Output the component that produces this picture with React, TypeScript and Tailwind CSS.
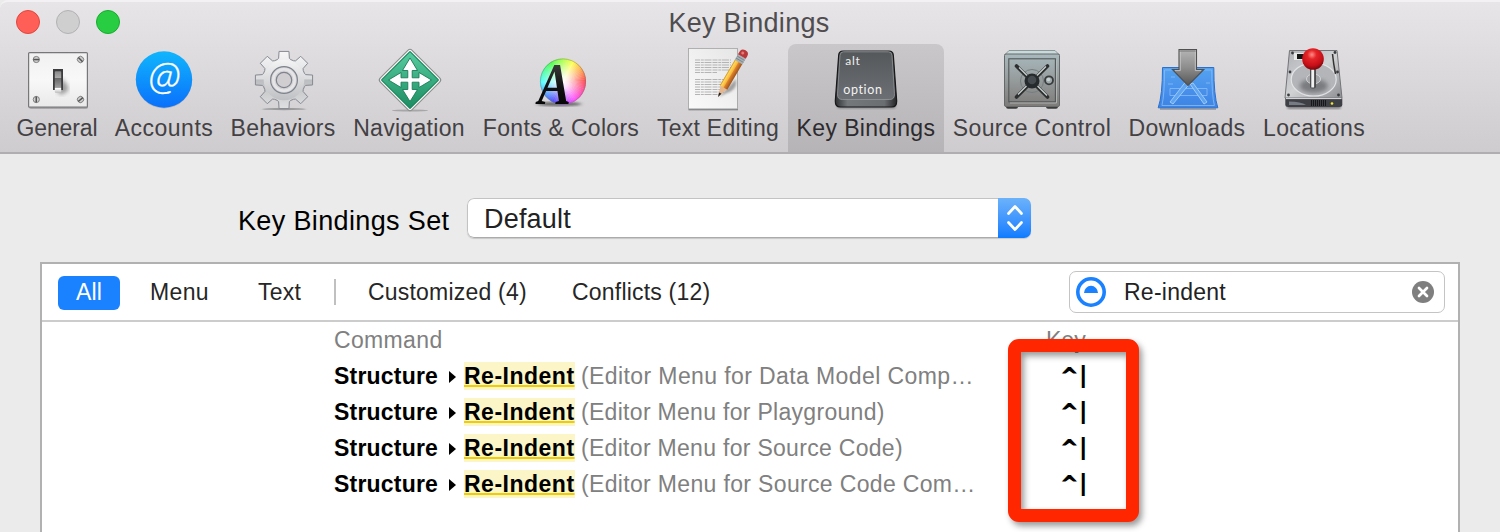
import React from "react";

const bar = "font-['Liberation_Sans',Arial,sans-serif]";

function GeneralIcon() {
  const screws: [number, number, number][] = [[36.3, 59.5, 0], [80.5, 59.5, 45], [36.3, 99.5, 90], [80.5, 99.5, -40]];
  return (
    <g>
      <defs>
        <linearGradient id="plate" x1="0" y1="0" x2="0" y2="1">
          <stop offset="0" stopColor="#f1f1f1" /><stop offset=".5" stopColor="#f8f8f8" /><stop offset="1" stopColor="#e9e9ea" />
        </linearGradient>
        <linearGradient id="lever" x1="0" y1="0" x2="0" y2="1">
          <stop offset="0" stopColor="#888" /><stop offset=".3" stopColor="#aaa" /><stop offset=".32" stopColor="#666" />
          <stop offset=".75" stopColor="#9d9d9d" /><stop offset=".8" stopColor="#fff" /><stop offset="1" stopColor="#bbb" />
        </linearGradient>
        <filter id="soft"><feGaussianBlur stdDeviation="2" /></filter>
      </defs>
      <rect x="29" y="54" width="59" height="55" rx="2" fill="#555" opacity=".35" />
      <rect x="28.6" y="52.6" width="58.8" height="54.6" rx="1" fill="url(#plate)" stroke="#777679" strokeWidth="1.2" />
      <path d="M62 78l6 8v5l-7 4-4-4z" fill="#444" opacity=".5" filter="url(#soft)" />
      <rect x="53" y="69" width="10" height="21" fill="#3c3c3e" />
      <rect x="54.8" y="71.2" width="6.4" height="21.6" rx=".8" fill="url(#lever)" />
      {screws.map(([x, y, r]) => (
        <g key={`${x}${y}`} transform={`rotate(${r} ${x} ${y})`}>
          <circle cx={x} cy={y} r="3.1" fill="#cfcfcf" stroke="#777" strokeWidth=".9" />
          <rect x={x - 3} y={y - 0.7} width="6" height="1.5" fill="#555" />
        </g>
      ))}
    </g>
  );
}

function AccountsIcon() {
  return (
    <g>
      <defs>
        <linearGradient id="acc" x1="0" y1="0" x2="0" y2="1">
          <stop offset="0" stopColor="#10b5fd" /><stop offset="1" stopColor="#0a70fb" />
        </linearGradient>
      </defs>
      <circle cx="164" cy="80.5" r="28" fill="#777" opacity=".35" />
      <circle cx="164" cy="79.5" r="28.2" fill="url(#acc)" />
      <text x="164.3" y="90.5" textAnchor="middle" fontFamily="Open Sans, Noto Sans, sans-serif" fontStyle="italic" fontWeight="300" fontSize="38" fill="#fff" stroke="#fff" strokeWidth=".3">@</text>
    </g>
  );
}

function gearPath(cx: number, cy: number) {
  const pts: string[] = [];
  for (let i = 0; i < 8; i++) {
    const a = i * 45 - 90;
    for (const [d, r] of [[-18.5, 21.5], [-14, 22.3], [-9.8, 29], [9.8, 29], [14, 22.3], [18.5, 21.5]]) {
      const t = ((a + d) * Math.PI) / 180;
      pts.push(`${(cx + r * Math.cos(t)).toFixed(2)} ${(cy + r * Math.sin(t)).toFixed(2)}`);
    }
  }
  return `M${pts.join("L")}Z`;
}

function BehaviorsIcon() {
  return (
    <g>
      <defs>
        <linearGradient id="gear" x1="0" y1="0" x2="0" y2="1">
          <stop offset="0" stopColor="#f6f6f7" /><stop offset=".48" stopColor="#dcdddf" /><stop offset=".5" stopColor="#bcbdc0" /><stop offset="1" stopColor="#dfe0e1" />
        </linearGradient>
        <linearGradient id="gearIn" x1="0" y1="0" x2="0" y2="1">
          <stop offset="0" stopColor="#f4f4f5" /><stop offset="1" stopColor="#bfc0c3" />
        </linearGradient>
        <filter id="soft1"><feGaussianBlur stdDeviation="1 .6" /></filter>
      </defs>
      <ellipse cx="284" cy="109" rx="22" ry="1.2" fill="#777" opacity=".6" filter="url(#soft1)" />
      <path d={gearPath(284, 80)} fill="url(#gear)" stroke="#858991" strokeWidth="1" strokeLinejoin="round" />
      <circle cx="284" cy="80" r="20.300" fill="url(#gearIn)" />
      <circle cx="284" cy="80" r="13.4" fill="#d4d4d7" stroke="#7e838c" strokeWidth="1.2" />
      <circle cx="284" cy="80" r="10.700" fill="none" stroke="#e6e6e8" strokeWidth="2.4" />
      <circle cx="284" cy="80" r="7.7" fill="#d0ced1" stroke="#7e838c" strokeWidth="1.2" />
    </g>
  );
}

function NavigationIcon() {
  return (
    <g>
      <defs>
        <linearGradient id="nav" x1="0" y1="0" x2="1" y2="1">
          <stop offset="0" stopColor="#59cda2" /><stop offset="1" stopColor="#1c8c62" />
        </linearGradient>
      </defs>
      <ellipse cx="410" cy="110.5" rx="18" ry="1" fill="#888" opacity=".6" />
      <rect x="387.500" y="57.500" width="45" height="45" rx="3" transform="rotate(45 410 80)" fill="#f6f7f6" stroke="#8b8b8b" strokeWidth="1.1" />
      <rect x="389.800" y="59.800" width="40.400" height="40.400" rx=".5" transform="rotate(45 410 80)" fill="url(#nav)" stroke="#14845a" strokeWidth="1" />
      <path d="M410 58l7.500 12.500h-5.300v7.300h6.800V72.500l12.500 7.500-12.500 7.500v-5.300h-6.800v7.300h5.300l-7.500 12-7.500-12h5.300v-7.300H401v5.300l-12.500-7.500 12.500-7.500v5.300h6.800v-7.300h-5.300z" fill="#fff" stroke="#197a56" strokeWidth=".9" />
    </g>
  );
}

function FontsIcon() {
  const wedges = Array.from({ length: 72 }, (_, i) => {
    const a = (i * 5 * Math.PI) / 180, b = ((i * 5 + 6) * Math.PI) / 180;
    return (
      <path key={i} fill={`hsl(${i * 5} 100% 64%)`}
        d={`M563 81.5L${563 + 23 * Math.cos(a)} ${81.5 - 23 * Math.sin(a)}L${563 + 23 * Math.cos(b)} ${81.5 - 23 * Math.sin(b)}Z`} />
    );
  });
  return (
    <g>
      <defs>
        <radialGradient id="wheel">
          <stop offset="0" stopColor="#fff" /><stop offset=".25" stopColor="#fff" stopOpacity=".82" /><stop offset="1" stopColor="#fff" stopOpacity="0" />
        </radialGradient>
        <linearGradient id="letter" x1="0" y1="0" x2="0" y2="1">
          <stop offset="0" stopColor="#555" /><stop offset=".55" stopColor="#111" /><stop offset="1" stopColor="#000" />
        </linearGradient>
        <filter id="soft2"><feGaussianBlur stdDeviation="2 1" /></filter>
      </defs>
      <ellipse cx="559" cy="104" rx="22" ry="2.5" fill="#333" opacity=".6" filter="url(#soft2)" />
      {wedges}
      <circle cx="563" cy="81.5" r="23" fill="url(#wheel)" />
      <circle cx="563" cy="81.5" r="22.6" fill="none" stroke="#777" strokeOpacity=".45" strokeWidth="1" />
      <text x="0" y="0" transform="translate(538 104) scale(.82 1)" fontFamily="Liberation Serif, serif" fontStyle="italic" fontWeight="700" fontSize="60" fill="url(#letter)">A</text>
    </g>
  );
}

function TextIcon() {
  const lines = [60, 62.5, 65, 67.5, 70, 72.5, 79.5, 82, 84.5, 87, 89.5, 92, 94.5];
  return (
    <g>
      <defs>
        <linearGradient id="paper" x1="1" y1="0" x2="0" y2="1">
          <stop offset="0" stopColor="#e6e6e6" /><stop offset="1" stopColor="#fafafa" />
        </linearGradient>
        <linearGradient id="wood" x1="0" y1="0" x2="1" y2="0">
          <stop offset="0" stopColor="#c78a1d" /><stop offset=".15" stopColor="#ffd75a" /><stop offset=".45" stopColor="#f6b73a" />
          <stop offset=".55" stopColor="#df812d" /><stop offset="1" stopColor="#9d5218" />
        </linearGradient>
        <filter id="soft3"><feGaussianBlur stdDeviation="1.2" /></filter>
      </defs>
      <rect x="688.5" y="49" width="49.5" height="61.3" fill="#77787a" />
      <rect x="688.5" y="48.5" width="49" height="60.4" fill="url(#paper)" stroke="#aaa" strokeWidth=".9" />
      {lines.map((y, i) => (
        <path key={y} d={`M695 ${y}h${i === 5 ? 22 : i === 12 ? 25 : i > 7 ? 29 : 36}`} stroke="#b4b4b4" strokeWidth="1.2" strokeDasharray="5 .8 3 .7 7 1" />
      ))}
      <path d="M719 97L736 79v6q-2 6-9 8z" fill="#555" opacity=".5" filter="url(#soft3)" />
      <g transform="translate(718 97) rotate(30.500)">
        <path d="M0 0L-4.200-13h8.400z" fill="#e5b78e" />
        <path d="M0 0l-1.4-4.500h2.800z" fill="#222" />
        <rect x="-4.300" y="-41" width="8.600" height="30" fill="url(#wood)" />
        <rect x="-4.500" y="-47" width="9" height="6.5" fill="#a6b1b5" />
        <path d="M-4.300-45h8.600M-4.300-42.700h8.600" stroke="#717c80" strokeWidth=".7" />
        <path d="M-4.500-47v-3q0-4.200 4.500-4.200t4.500 4.200v3z" fill="#b9383a" />
        <circle cx="-1" cy="-50.500" r="1.5" fill="#e37b76" />
      </g>
    </g>
  );
}

function KeyIcon() {
  return (
    <g>
      <defs>
        <linearGradient id="cap" x1="0" y1="0" x2="0" y2="1">
          <stop offset="0" stopColor="#55585b" /><stop offset="1" stopColor="#6c6f73" />
        </linearGradient>
        <linearGradient id="capSide" x1="0" y1="0" x2="1" y2="0">
          <stop offset="0" stopColor="#2d2f31" /><stop offset=".2" stopColor="#75787b" /><stop offset=".8" stopColor="#6b6e71" /><stop offset="1" stopColor="#242527" />
        </linearGradient>
      </defs>
      <rect x="837" y="103" width="59" height="5.5" rx="3" fill="#333" opacity=".4" filter="url(#soft3)" />
      <path d="M843 51h46q4 0 4.3 4l3.4 46q.2 6-5 6h-51.4q-5.200 0-5-6l3.400-46q.3-4 4.300-4z" fill="url(#capSide)" stroke="#17181a" strokeWidth="1.2" />
      <path d="M843.500 51.800h45q3.200 0 3.500 3.500l2.500 38.500q.3 5.700-4.700 5.700h-47.600q-5 0-4.700-5.700l2.500-38.500q.3-3.500 3.500-3.500z" fill="url(#cap)" stroke="#94979a" strokeWidth=".8" />
      <text x="845.300" y="65" fontFamily="Lato, sans-serif" fontSize="12" letterSpacing=".7" fill="#eee">alt</text>
      <text x="843.300" y="94" fontFamily="Lato, sans-serif" fontSize="12.500" letterSpacing=".6" fill="#f3f3f3">option</text>
    </g>
  );
}

function SourceIcon() {
  return (
    <g>
      <defs>
        <linearGradient id="safe" x1="0" y1="0" x2="0" y2="1">
          <stop offset="0" stopColor="#a8b9bd" /><stop offset=".45" stopColor="#989e9f" /><stop offset="1" stopColor="#7d7b78" />
        </linearGradient>
      </defs>
      <rect x="1006" y="104" width="12" height="4.800" rx="2" fill="#3b3b3b" />
      <rect x="1046" y="104" width="12" height="4.800" rx="2" fill="#3b3b3b" />
      <path d="M1009 50.500h46l4.500 4.500h-55z" fill="#c9dadd" stroke="#7a8587" strokeWidth=".8" />
      <rect x="1004.500" y="54" width="55" height="52.500" rx="1.500" fill="url(#safe)" stroke="#66696a" strokeWidth="1" />
      <rect x="1008.800" y="58.800" width="46.600" height="43" fill="none" stroke="#535758" strokeWidth="1.100" />
      <path d="M1010 103h46.500V60" fill="none" stroke="#b9bdbd" strokeWidth=".8" />
      <circle cx="1032" cy="81" r="11.500" fill="none" stroke="#767d7f" strokeWidth="1" />
      <path d="M1016.500 66l31 31M1047.500 66l-31 31" stroke="#2c2e2f" strokeWidth="3.600" strokeLinecap="round" />
      <path d="M1019 67.500l28 28M1046 66.500l-28 28" stroke="#d3d8d9" strokeWidth="1.100" />
      <circle cx="1032" cy="81" r="7.500" fill="#262a2c" />
      <circle cx="1032" cy="80" r="4.300" fill="#454b4e" />
      <circle cx="1049" cy="80.300" r="4" fill="#9fa9ab" stroke="#393c3d" strokeWidth="1.800" />
      <circle cx="1048.500" cy="79.500" r="1.800" fill="#c9d2d3" />
    </g>
  );
}

function DownloadsIcon() {
  return (
    <g>
      <defs>
        <linearGradient id="blue" x1="0" y1="0" x2="0" y2="1">
          <stop offset="0" stopColor="#55a3ef" /><stop offset=".6" stopColor="#478feb" /><stop offset="1" stopColor="#3c83e3" />
        </linearGradient>
        <linearGradient id="arrow" x1="0" y1="0" x2="0" y2="1">
          <stop offset="0" stopColor="#b5b5b5" /><stop offset=".5" stopColor="#8d8d8d" /><stop offset="1" stopColor="#565656" />
        </linearGradient>
      </defs>
      <path d="M1160 109h56" stroke="#555" strokeWidth="1.500" opacity=".5" />
      <path d="M1162.500 67.500h51.300q0 28 4 40.300h-59.600q4.300-12.300 4.300-40.300z" fill="url(#blue)" stroke="#2a70cf" strokeWidth="1" />
      <path d="M1164.500 70h47.300q0 25 2.600 35.500h-52.500q2.600-10.500 2.600-35.500zM1170 88.500h37v7h-37zM1171 77h4M1206 83h4M1168 84h5" fill="none" stroke="#8abdf7" strokeWidth=".8" />
      <path d="M1187 80l-17 22 3 2 18-22zM1190 84l14 20 3-2-14-19z" fill="#60a5f2" stroke="#a6cff9" strokeWidth=".9" />
      <path d="M1179 49.500h17.500v20h7.300l-15.800 16-15.600-16h6.600z" fill="url(#arrow)" stroke="#505050" strokeWidth="1.100" />
      <path d="M1180.200 51h15" stroke="#777" strokeWidth="1" />
      <path d="M1180.300 52v18.600h-5.300M1195.300 52v18.600h5.800" fill="none" stroke="#ccc" strokeWidth=".8" />
    </g>
  );
}

function LocationsIcon() {
  return (
    <g>
      <defs>
        <linearGradient id="disk" x1="0" y1="0" x2="1" y2="1">
          <stop offset="0" stopColor="#b0b1b5" /><stop offset=".5" stopColor="#d1d2d4" /><stop offset="1" stopColor="#8d8e92" />
        </linearGradient>
        <radialGradient id="ball" cx=".45" cy=".3" r=".7">
          <stop offset="0" stopColor="#ff8d87" /><stop offset=".3" stopColor="#e52528" /><stop offset=".75" stopColor="#c40e17" /><stop offset="1" stopColor="#74080d" />
        </radialGradient>
      </defs>
      <rect x="1287" y="104" width="54" height="5" rx="2" fill="#333" opacity=".5" filter="url(#soft3)" />
      <path d="M1289.500 50.500h47.500l5 47.500h-57z" fill="url(#disk)" stroke="#737478" strokeWidth="1" />
      <path d="M1285.300 98.300h57v6.200q0 2.500-3 2.500h-51q-3 0-3-2.500z" fill="#3f4045" />
      <path d="M1286 98.600h55.500" stroke="#e0e0e2" strokeWidth="1" />
      <path d="M1289 101.500q12 0 17 3.500h-17z" fill="#777b83" />
      <path d="M1311 103h16" stroke="#17171a" strokeWidth="6" strokeDasharray="1 1" />
      <circle cx="1332" cy="103.500" r="1.300" fill="#f4e637" />
      <ellipse cx="1313.700" cy="79.500" rx="22.500" ry="16.500" fill="#b4b5b9" stroke="#e3e4e6" strokeWidth="1.200" />
      <ellipse cx="1313.700" cy="86" rx="14" ry="7" fill="#4c4d50" opacity=".55" filter="url(#soft)" />
      <ellipse cx="1313.500" cy="79" rx="7" ry="5" fill="#a2a3a7" stroke="#ddd" strokeWidth=".8" />
      <rect x="1294" y="53" width="12" height="7" fill="#e8e8e9" />
      <rect x="1297" y="54" width="8" height="5" fill="#151515" />
      <path d="M1332.500 54q1 10 3 20" fill="none" stroke="#333" strokeWidth="1.500" />
      {[[1292.500, 53], [1335, 52.500], [1290, 72], [1337.500, 72], [1288.500, 95], [1338.500, 95]].map(([x, y]) => (
        <circle key={`${x}-${y}`} cx={x} cy={y} r="1.400" fill="#3a3b3e" />
      ))}
      <rect x="1310" y="68" width="6" height="20.500" rx="2.200" fill="#4c4c4e" />
      <rect x="1311.300" y="68" width="2.800" height="19.500" fill="#f1f1f1" />
      <circle cx="1313" cy="59" r="10.800" fill="url(#ball)" />
    </g>
  );
}

const tabs = [
  { label: "General", cx: 57, cell: "w-[98px] tracking-[-0.1px]", icon: <GeneralIcon /> },
  { label: "Accounts", cx: 164, cell: "w-[116px] tracking-[0.5px]", icon: <AccountsIcon /> },
  { label: "Behaviors", cx: 283, cell: "w-[122px] tracking-[0.3px]", icon: <BehaviorsIcon /> },
  { label: "Navigation", cx: 409, cell: "w-[130px] tracking-[0.3px]", icon: <NavigationIcon /> },
  { label: "Fonts & Colors", cx: 561, cell: "w-[174px] tracking-[0.3px]", icon: <FontsIcon /> },
  { label: "Text Editing", cx: 718, cell: "w-[140px] tracking-[0.27px]", icon: <TextIcon /> },
  { label: "Key Bindings", cx: 866, cell: "w-[156px] tracking-[0.38px]", icon: <KeyIcon />, active: true },
  { label: "Source Control", cx: 1032, cell: "w-[176px] tracking-[0.35px]", icon: <SourceIcon /> },
  { label: "Downloads", cx: 1187, cell: "w-[134px] tracking-[0.35px]", icon: <DownloadsIcon /> },
  { label: "Locations", cx: 1314, cell: "w-[120px] tracking-[0.4px]", icon: <LocationsIcon /> },
];

const rows = [
  { menu: "(Editor Menu for Data Model Comp…", spacing: "tracking-[0.4px]" },
  { menu: "(Editor Menu for Playground)", spacing: "tracking-[0.3px]" },
  { menu: "(Editor Menu for Source Code)", spacing: "tracking-[0.3px]" },
  { menu: "(Editor Menu for Source Code Com…", spacing: "tracking-[0.34px]" },
];

export default function App() {
  return (
    <div className={`relative flex h-[532px] w-[1500px] flex-col overflow-hidden bg-[#ebebeb] ${bar}`}>
      <header className="flex h-[154px] shrink-0 flex-col rounded-tl-lg border-t-2 border-b-2 border-t-[#f3f1f3] border-b-[#b0aeb1] bg-linear-to-b from-[#e7e5e7] to-[#cecccf]">
        <div className="grid h-[42px] shrink-0 grid-cols-[1fr_auto_1fr] pt-1.5">
          <div className="flex gap-4 pt-0.5 pl-4">
            <span className="size-6 rounded-full border border-[#e2453e] bg-[#ff5f57]" />
            <span className="size-6 rounded-full border border-[#b2b1b3] bg-[#d0cfd0]" />
            <span className="size-6 rounded-full border border-[#14ae2e] bg-[#28cd41]" />
          </div>
          <h1 className="-ml-0.5 text-[27px] leading-[30px] tracking-[0.3px] text-[#4f4d50]">Key Bindings</h1>
        </div>
        <nav className="flex grow pl-2">
          {tabs.map((t) => (
            <button
              key={t.label}
              className={`flex shrink-0 flex-col items-center text-[23px] leading-[26px] whitespace-nowrap ${t.cell} ${
                t.active ? "rounded-t-lg bg-linear-to-b from-[#c9c7ca] to-[#b6b4b7] text-[#2c2a2d]" : "text-[#434144]"
              }`}
            >
              <svg className="h-[71px] w-[72px] shrink-0 overflow-visible tracking-normal" viewBox={`${t.cx - 36} 44 72 71`}>{t.icon}</svg>
              <span>{t.label}</span>
            </button>
          ))}
        </nav>
      </header>

      <div className="flex h-[108px] shrink-0 items-start pt-11 pl-[238px]">
        <label className="mt-2 w-[229px] text-[27px] leading-[30px] tracking-[0.36px] text-black">Key Bindings Set</label>
        <div className="flex h-10 w-[564px] overflow-hidden rounded-[7px] shadow-[0_1px_1px_rgba(0,0,0,0.15)]">
          <div className="grow rounded-l-[7px] border border-r-0 border-[#c3c3c3] border-b-[#ababab] bg-white pt-[5px] pl-4 text-[27px] leading-[30px] tracking-[0.2px] text-[#222]">
            Default
          </div>
          <div className="flex w-[33px] items-center justify-center bg-linear-to-b from-[#6bb2fa] to-[#0a7bff]">
            <svg className="h-7 w-5" viewBox="0 0 20 28" fill="none" stroke="#fff" strokeWidth="2.700" strokeLinecap="round" strokeLinejoin="round">
              <path d="M3.500 9.500L10 2.500l6.500 7M3.500 18.500l6.500 7 6.500-7" />
            </svg>
          </div>
        </div>
      </div>

      <main className="mx-10 flex grow flex-col border-2 border-b-0 border-[#b1b1b1] bg-white">
        <div className="flex h-[58px] shrink-0 items-start border-b-2 border-[#ccc] pt-3 pl-4 text-[23px] leading-[26px] text-[#262626]">
          <span className="flex h-[34px] w-[62px] justify-center rounded-md bg-[#1a82ff] pt-[3px] tracking-[0.2px] text-white">All</span>
          <span className="mt-[3px] ml-[30px] w-[108px] tracking-[0.35px]">Menu</span>
          <span className="mt-[3px] w-[76px] tracking-[0.2px]">Text</span>
          <span className="mt-[3px] h-[26px] w-0.5 bg-[#c0c0c0]" />
          <span className="mt-[3px] ml-8 w-[204px] tracking-[0.2px]">Customized (4)</span>
          <span className="mt-[3px] tracking-[0.2px]">Conflicts (12)</span>
          <div className="-mt-[5px] mr-[13px] ml-auto flex h-[42px] w-[376px] items-center rounded-[7px] border-[1.5px] border-[#c4c4c4] pr-2.5 pl-1.5">
            <svg className="size-[30px]" viewBox="0 0 30 30">
              <circle cx="15" cy="15" r="13.200" fill="none" stroke="#1a82ff" strokeWidth="3.600" />
              <path d="M8 16a7 7.200 0 0 1 14 0z" fill="#1a82ff" />
            </svg>
            <span className="ml-[18px] grow tracking-[0.25px] text-[#222]">Re-indent</span>
            <svg className="size-[22px]" viewBox="0 0 22 22">
              <circle cx="11" cy="11" r="11" fill="#7f7f7f" />
              <path d="M7 7l8 8M15 7l-8 8" stroke="#fff" strokeWidth="2.700" strokeLinecap="round" />
            </svg>
          </div>
        </div>
        <div className="grid shrink-0 grid-cols-[712px_1fr] pl-[292px] text-[23px] leading-9 whitespace-nowrap text-[#808080]">
          <span className="tracking-[0.35px]">Command</span>
          <span className="tracking-[0px]">Key</span>
          {rows.map((r) => (
            <React.Fragment key={r.menu}>
              <div className="flex h-9 items-center">
                <b className="w-[115px] tracking-[0.2px] text-black">Structure</b>
                <svg className="mt-0.5 mr-2 h-3 w-[7px]" viewBox="0 0 7 12"><path d="M0 0l7 6-7 6z" /></svg>
                <b className="h-7 w-[111px] bg-[#fbf5c8] leading-7 tracking-[0.5px] text-black underline decoration-[#f0cc00] decoration-2 underline-offset-[1px] [text-decoration-skip-ink:none]">Re-Indent</b>
                <span className={`ml-1.5 ${r.spacing}`}>{r.menu}</span>
              </div>
              <div className="flex h-9 pl-[14px] font-bold text-black">
                <span className="-mt-px w-[20px] pl-px font-['DejaVu_Sans',sans-serif] text-[20px] [-webkit-text-stroke:1px_black]">^</span>
                <span className="-mt-px">|</span>
              </div>
            </React.Fragment>
          ))}
        </div>
      </main>

      <div className="absolute top-[339px] left-[1008px] h-[183px] w-[131px] rounded-[11px] border-[13px] border-[#ff2600] drop-shadow-[3px_4px_3px_rgba(0,0,0,0.4)]" />
    </div>
  );
}
